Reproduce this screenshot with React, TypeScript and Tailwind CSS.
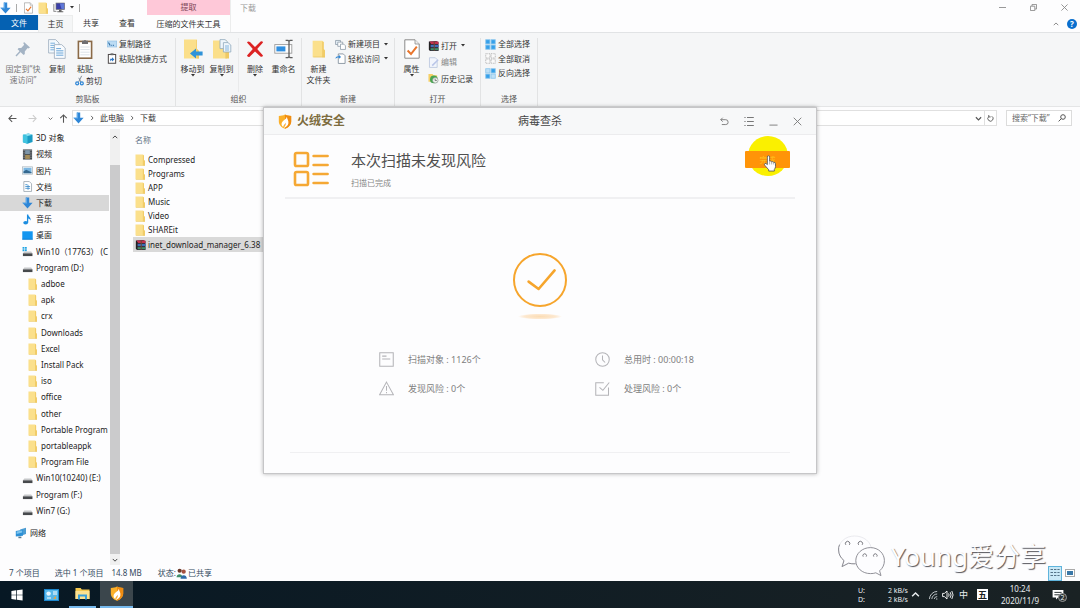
import React from "react";

type IconProps = { className?: string };

const Folder = ({ className = "h-[13px] w-[10px]" }: IconProps) => (
  <svg viewBox="0 0 10 13" className={className} preserveAspectRatio="none" aria-hidden="true">
    <path d="M0.5 0.5H8L9 1.5V6.5L10 7.5V12.5H0.5Z" fill="#fbe08c" />
    <path d="M7.8 1L9 1.5V6.5L10 7.5V12.5H7.8Z" fill="#f1cc68" />
    <path d="M1 12.5H10V12H1Z" fill="#eac764" />
  </svg>
);

const DownArrow = ({ className = "h-3 w-[11px]" }: IconProps) => (
  <svg viewBox="0 0 11 12" className={className} aria-hidden="true">
    <path d="M3.8 0.5H7.2V5.8H10.6L5.5 11.6L0.4 5.8H3.8Z" fill="#2f86d6" />
    <path d="M3.8 0.5H5V6.5H1L0.4 5.8H3.8Z" fill="#5aa8ea" />
  </svg>
);

const CheckDoc = ({ className = "h-[11px] w-[9px]" }: IconProps) => (
  <svg viewBox="0 0 16 20" className={className} aria-hidden="true">
    <path d="M0.8 0.8H11L15.2 5V19.2H0.8Z" fill="#fff" stroke="#8a8a8a" strokeWidth="1" />
    <path d="M11 0.8V5H15.2" fill="#eee" stroke="#8a8a8a" strokeWidth="0.8" />
    <path d="M3.6 11.5L7 15L12.8 7.6" fill="none" stroke="#e8752c" strokeWidth="2" />
  </svg>
);

const Monitor = () => (
  <svg viewBox="0 0 14 12" className="h-[11px] w-3" aria-hidden="true">
    <path d="M1 2V10M0.5 10.5H4" stroke="#777" strokeWidth="1" />
    <rect x="3.5" y="0.8" width="10" height="7.6" fill="#3b3fa8" stroke="#777" strokeWidth="0.8" />
    <path d="M8 1.4H13V7.8H10Z" fill="#5f78d8" />
    <path d="M7 8.5H10V10.5H12V11.5H5V10.5H7Z" fill="#666" />
  </svg>
);

const Rar = ({ className = "h-3 w-[11px]" }: IconProps) => (
  <svg viewBox="0 0 12 12" className={className} aria-hidden="true">
    <path d="M1 1L9 0.5L11.5 2V11.5H2.5L1 10Z" fill="#3a2a3a" />
    <path d="M2 1.2H11.4V3.8H2.8Z" fill="#c4304c" />
    <path d="M2.6 4.8H11.6V7.2H2.6Z" fill="#3c6fb8" />
    <path d="M2.6 8.4H11.6V10.6H2.6Z" fill="#3e8f68" />
    <path d="M1 1L2.6 3V11.4L1 10Z" fill="#222" />
    <path d="M6.2 1V11.5H7.4V1Z" fill="#6b4a38" />
  </svg>
);

const Pin = () => (
  <svg viewBox="0 0 16 16" className="size-4" aria-hidden="true">
    <path d="M9 1L15 6.6L13.3 7.4L12.6 7.1L9.8 10.4L9.8 13L8.6 13.9L2.6 8.2L3.6 7.1L6.2 7L9.2 3.8L8.3 2.2Z" fill="#a3b3c4" />
    <path d="M5.4 10.3L1 15" stroke="#a3b3c4" strokeWidth="1.4" />
  </svg>
);

const CopyDocs = ({ className = "h-5 w-[18px]" }: IconProps) => (
  <svg viewBox="0 0 18 20" className={className} aria-hidden="true">
    <path d="M0.6 0.6H7.6L11 4V14H0.6Z" fill="#f4f9fd" stroke="#9aabbb" strokeWidth="0.8" />
    <path d="M2.4 4.2H7M2.4 6.4H8M2.4 8.6H8M2.4 10.8H8" stroke="#7ab0dc" strokeWidth="1" />
    <path d="M6.4 5.6H13.6L17.2 9V19.4H6.4Z" fill="#f8fbfe" stroke="#9aabbb" strokeWidth="0.8" />
    <path d="M8.2 9.6H13M8.2 11.8H15.4M8.2 14H15.4M8.2 16.2H15.4" stroke="#6aa6d8" strokeWidth="1" />
  </svg>
);

const Clipboard = () => (
  <svg viewBox="0 0 16 20" className="h-5 w-4" aria-hidden="true">
    <rect x="1.4" y="2.4" width="13.2" height="16.8" fill="#fff" stroke="#8a6a48" strokeWidth="1.6" />
    <path d="M3.4 8H12.6M3.4 10.6H12.6M3.4 13.2H12.6M3.4 15.8H12.6" stroke="#d3dbe2" strokeWidth="0.8" />
    <path d="M5 3.6V1.8H6.8A1.3 1.3 0 0 1 9.2 1.8H11V5H5Z" fill="#6f6f72" />
  </svg>
);

const PathIcon = () => (
  <svg viewBox="0 0 10 8" className="h-2 w-[10px]" aria-hidden="true">
    <rect x="0.3" y="1" width="9.4" height="6" fill="#bcdcf4" stroke="#8cbde2" strokeWidth="0.6" />
    <path d="M1.5 2.5L3.2 5.5M4.4 5.4H5.2M6.2 5.4H7" stroke="#2d6ca4" strokeWidth="1.1" />
  </svg>
);

const ShortcutIcon = () => (
  <svg viewBox="0 0 10 12" className="h-[11px] w-[10px]" aria-hidden="true">
    <rect x="1" y="1.6" width="8" height="9.6" fill="#fff" stroke="#4f4a4a" strokeWidth="1.1" />
    <rect x="3.4" y="0.4" width="3.2" height="2" fill="#666" />
    <path d="M3 9.2V6.4H5V4.6L7.6 7L5 9.2V8H4Z" fill="#2d76c4" />
  </svg>
);

const Scissors = () => (
  <svg viewBox="0 0 10 12" className="h-[11px] w-[9px]" aria-hidden="true">
    <path d="M7.4 0.8L4 7.6M4.2 3L6.6 7.8" stroke="#7c8a96" strokeWidth="1.1" />
    <circle cx="2.4" cy="9.2" r="1.6" fill="none" stroke="#2f86d6" strokeWidth="1.4" />
    <circle cx="7.6" cy="9.2" r="1.6" fill="none" stroke="#2f86d6" strokeWidth="1.4" />
  </svg>
);

const MoveTo = () => (
  <svg viewBox="0 0 20 20" className="size-5" aria-hidden="true">
    <path d="M1 0.5H14V10L16 12V19.5H1Z" fill="#fbdf8a" />
    <path d="M14 1V10L16 12V19.5H13.4V1Z" fill="#efc964" />
    <path d="M19.6 12.6H13V9.4L7 14.6L13 19.6V16.6H19.6Z" fill="#2f93d8" />
  </svg>
);

const CopyTo = () => (
  <svg viewBox="0 0 20 20" className="size-5" aria-hidden="true">
    <path d="M1 1.5H15V19.5H1Z" fill="#fbdf8a" />
    <path d="M13.4 10H15L17 12V19.5H13.4Z" fill="#efc964" />
    <path d="M8 0.6H13L15.4 2.6V9.6H8Z" fill="#eff6fb" stroke="#91a9bc" strokeWidth="0.8" />
    <path d="M11.4 3.6H16L18.8 6V13H11.4Z" fill="#eff6fb" stroke="#91a9bc" strokeWidth="0.8" />
    <path d="M13 7H17M13 9H17M13 11H17" stroke="#6aa6d8" strokeWidth="0.8" />
  </svg>
);

const Delete = () => (
  <svg viewBox="0 0 20 20" className="size-5" aria-hidden="true">
    <path d="M2 3.4Q3 1.6 5 3L10 8L15.6 2.4Q17.6 1.6 18 3.4L12.2 10L18 16.4Q17.4 18.6 15.4 17.4L10 12.4L4.4 18Q2.4 18.4 2 16.6L7.8 10Z" fill="#dc2323" />
  </svg>
);

const Rename = () => (
  <svg viewBox="0 0 20 20" className="size-5" aria-hidden="true">
    <rect x="0.8" y="5.6" width="17" height="8.6" fill="#fff" stroke="#9b9b9b" strokeWidth="0.9" />
    <rect x="2.4" y="7.4" width="9" height="5" fill="#2f8fe0" />
    <path d="M11.6 1.4H14L15 2.2L16 1.4H18.6M15 2V18M11.6 18.6H14L15 17.8L16 18.6H18.6" fill="none" stroke="#5d5d5d" strokeWidth="1.3" />
  </svg>
);

const NewItem = () => (
  <svg viewBox="0 0 12 12" className="size-[11px]" aria-hidden="true">
    <path d="M0.6 1.6H6V6H0.6Z" fill="#e5eef5" stroke="#8796a3" strokeWidth="0.8" />
    <path d="M3 3.4H8.4V8H3Z" fill="#fff" stroke="#8796a3" strokeWidth="0.8" />
    <path d="M6 5.6H9.6L11.4 7.4V11.4H6Z" fill="#fff" stroke="#8796a3" strokeWidth="0.8" />
  </svg>
);

const EasyAccess = () => (
  <svg viewBox="0 0 12 12" className="size-[11px]" aria-hidden="true">
    <path d="M3.6 1H9L11 3V11.4H3.6Z" fill="#fff" stroke="#7d8b98" strokeWidth="0.9" />
    <path d="M0.6 6.4C0.6 4 2.4 3.4 4.4 3.6V2.2L6.6 4.4L4.4 6.4V5C2.6 4.8 2 5.4 0.6 6.4Z" fill="#2f86d6" />
  </svg>
);

const EditIcon = () => (
  <svg viewBox="0 0 12 12" className="size-[11px]" aria-hidden="true">
    <path d="M1.6 0.8H8L10 2.8V11.4H1.6Z" fill="#f2f5fc" stroke="#b9c6dd" strokeWidth="0.9" />
    <path d="M4 8.8L10.6 2.4L11.6 3.6L5.2 10Z" fill="#b9c5e8" />
  </svg>
);

const HistoryIcon = () => (
  <svg viewBox="0 0 12 12" className="size-[11px]" aria-hidden="true">
    <path d="M0.5 1H5L6 2.4H10V9.6H0.5Z" fill="#f5cf66" />
    <circle cx="6.4" cy="7" r="4.2" fill="#47a552" />
    <circle cx="8" cy="8" r="3" fill="#eef2ee" stroke="#7a8a80" strokeWidth="0.6" />
    <path d="M7.8 6.2V8.2H9.6" stroke="#555" strokeWidth="0.8" fill="none" />
  </svg>
);

const SelectGrid = ({ kind }: { kind: "all" | "none" | "invert" }) => {
  const on = "#35a0ea";
  const pale = "#bfe0f6";
  const off = "#fafafa";
  const fills = kind === "all" ? [on, on, on, on] : kind === "none" ? [off, off, off, off] : [pale, on, on, pale];
  const stroke = kind === "none" ? "#a7a7a7" : "#8cc6ec";
  const dash = kind === "none" ? "1 0.8" : undefined;
  return (
    <svg viewBox="0 0 12 12" className="size-[11px]" aria-hidden="true">
      {[[0.8, 0.8], [6.6, 0.8], [0.8, 6.6], [6.6, 6.6]].map(([x, y], i) => (
        <rect key={i} x={x} y={y} width="4.6" height="4.6" fill={fills[i]} stroke={stroke} strokeWidth="0.9" strokeDasharray={dash} />
      ))}
    </svg>
  );
};

const Cube = () => (
  <svg viewBox="0 0 12 12" className="size-[11px]" aria-hidden="true">
    <path d="M1 2L7 0.5L11.5 2V9.8L6 11.6L1 10Z" fill="#1b9bc4" />
    <path d="M1 2L7 0.5L11.5 2L6 3.4Z" fill="#8ee2f2" />
    <path d="M1 2L6 3.4V11.6L1 10Z" fill="#41c4e0" />
  </svg>
);

const Film = () => (
  <svg viewBox="0 0 12 12" className="size-[11px]" aria-hidden="true">
    <rect x="1" y="0.5" width="10" height="11" fill="#3d4349" />
    <rect x="3.4" y="1.2" width="5.2" height="4.4" fill="#7d95a8" />
    <rect x="3.4" y="6.4" width="5.2" height="4.4" fill="#a48c58" />
    <path d="M2.2 1V11M9.8 1V11" stroke="#d5d5d5" strokeWidth="0.9" strokeDasharray="1 1" />
  </svg>
);

const Picture = () => (
  <svg viewBox="0 0 12 12" className="size-[11px]" aria-hidden="true">
    <rect x="0.6" y="2" width="10.8" height="8" fill="#fff" stroke="#a9b4bc" strokeWidth="0.8" />
    <rect x="1.6" y="3" width="8.8" height="6" fill="#7cb7e2" />
    <path d="M1.6 7L4.6 5.2L10.4 8V9H1.6Z" fill="#35688f" />
  </svg>
);

const DocIcon = () => (
  <svg viewBox="0 0 12 12" className="size-[11px]" aria-hidden="true">
    <path d="M2 0.6H8L10.4 3V11.4H2Z" fill="#fff" stroke="#8f9ba6" strokeWidth="0.8" />
    <path d="M3.6 4H6M3.6 6H8.8M3.6 8H8.8M6.6 4.2V9.6" stroke="#3a8bc9" strokeWidth="0.9" />
  </svg>
);

const MusicIcon = () => (
  <svg viewBox="0 0 12 12" className="size-[11px]" aria-hidden="true">
    <ellipse cx="4" cy="9.6" rx="2.6" ry="1.9" fill="#1c8de0" />
    <path d="M5.4 0.6H6.8C7 3 10 3.6 9.4 7.4C9 5.6 7.8 5 6.8 4.8V9.6H5.4Z" fill="#1c8de0" />
  </svg>
);

const Desktop = () => (
  <svg viewBox="0 0 12 12" className="size-[11px]" aria-hidden="true">
    <rect x="0.3" y="1.4" width="11.4" height="9" fill="#1496f0" />
    <path d="M0.3 9.6H11.7V10.4H0.3Z" fill="#0b74c4" />
  </svg>
);

const Drive = ({ system = false }: { system?: boolean }) => (
  <svg viewBox="0 0 12 12" className="size-[11px]" aria-hidden="true">
    {system && <path d="M0.6 1H2.6V3H0.6ZM3.2 1H5.2V3H3.2ZM0.6 3.6H2.6V5.6H0.6ZM3.2 3.6H5.2V5.6H3.2Z" fill="#20a4e4" />}
    <path d="M2.6 6H10L11.4 8H1Z" fill="#c5c7c9" />
    <rect x="1" y="8" width="10.4" height="3" fill="#46494c" />
  </svg>
);

const Network = () => (
  <svg viewBox="0 0 12 12" className="size-3" aria-hidden="true">
    <path d="M5 2.4L11 0.8V7L8 8Z" fill="#4c9cd2" />
    <path d="M0.8 4L8 2.8V8.8L0.8 9.4Z" fill="#2b8fd6" />
    <path d="M1.6 4.6L7.2 3.6V5.6L1.6 7Z" fill="#7cc4ee" />
    <path d="M3.4 9.6H6.4V11.2H3.4Z" fill="#5a7a90" />
  </svg>
);

const Shield = ({ className = "h-[15px] w-[13px]" }: IconProps) => (
  <svg viewBox="0 0 14 16" className={className} aria-hidden="true">
    <path d="M7 0.5C9 1.6 11 2 13.6 2V8C13.6 12 10.4 14.4 7 15.8C3.6 14.4 0.4 12 0.4 8V2C3 2 5 1.6 7 0.5Z" fill="#fbb02a" />
    <path d="M7 0.5C9 1.6 11 2 13.6 2V8C13.6 12 10.4 14.4 7 15.8Z" fill="#f08c12" />
    <path d="M9 3C9.2 6 11.2 7 10.6 10C10.2 12.2 8 13.8 5.6 15C7.4 12.8 8 11 7.6 9.4C7 11 5.6 11.6 5 13.8C3 12.2 2.8 10 4.2 8.2C5.8 6.4 8.2 5.8 9 3Z" fill="#fff" />
  </svg>
);

const Chevron = ({ dir, className = "size-2" }: { dir: "up" | "down" | "right"; className?: string }) => (
  <svg viewBox="0 0 8 8" className={className} fill="none" stroke="currentColor" strokeWidth="1.3" aria-hidden="true">
    <path d={dir === "up" ? "M1 5.6L4 2.6L7 5.6" : dir === "down" ? "M1 2.6L4 5.6L7 2.6" : "M2.8 1.2L5.4 4L2.8 6.8"} />
  </svg>
);

const Arrow = ({ dir, className }: { dir: "left" | "right" | "up"; className: string }) => (
  <svg viewBox="0 0 10 10" className={className} fill="none" stroke="currentColor" strokeWidth="1.2" aria-hidden="true">
    <path d={dir === "left" ? "M9.4 5H1M4.6 1.2L1 5L4.6 8.8" : dir === "right" ? "M0.6 5H9M5.4 1.2L9 5L5.4 8.8" : "M5 9.6V1M1.4 4.6L5 1L8.6 4.6"} />
  </svg>
);

const Caret = () => (
  <svg viewBox="0 0 4 3" className="h-[3px] w-1 shrink-0" aria-hidden="true">
    <path d="M0 0H4L2 2.6Z" fill="#333" />
  </svg>
);

const Big = ({ icon, label, caret = false, width = "w-7", muted = false }: { icon: React.ReactNode; label: React.ReactNode; caret?: boolean; width?: string; muted?: boolean }) => (
  <button type="button" className={`flex shrink-0 flex-col items-center whitespace-nowrap ${width} ${muted ? "text-[#777]" : "text-[#333]"}`}>
    <span className="flex h-[22px] items-center">{icon}</span>
    <span className="pt-[3px] leading-[11px]">{label}</span>
    {caret && <Caret />}
  </button>
);

const Small = ({ icon, label, caret = false, muted = false, height = "h-[15px]" }: { icon: React.ReactNode; label: string; caret?: boolean; muted?: boolean; height?: string }) => (
  <button type="button" className={`flex items-center gap-[2px] whitespace-nowrap ${height} ${muted ? "text-[#888]" : "text-[#333]"}`}>
    {icon}
    <span>{label}</span>
    {caret && <span className="pl-[2px]"><Caret /></span>}
  </button>
);

const Group = ({ title, width, children }: { title: string; width: string; children: React.ReactNode }) => (
  <section className={`flex shrink-0 flex-col border-r border-[#e2e3e4] ${width}`}>
    <div className="flex h-[54px] items-start">{children}</div>
    <h2 className="text-center leading-[13px] text-[#555]">{title}</h2>
  </section>
);

const Header = () => (
  <header className="flex h-[33px] shrink-0 border-b border-[#e1e3e5] bg-[#fdfdfe]">
    <div className="flex w-[147px] flex-col">
      <div className="flex h-4 items-center gap-[5px] text-[#999]">
        <DownArrow />
        <span className="mr-[2px] h-2 w-px bg-[#aaa]" />
        <CheckDoc className="h-3 w-[9px]" />
        <Folder className="h-3 w-[10px]" />
        <Monitor />
        <Caret />
        <span className="h-2 w-px bg-[#aaa]" />
      </div>
      <nav className="flex flex-1 text-[8px] text-[#333]">
        <button type="button" className="h-[15px] w-[38px] bg-[#0561b2] text-white">文件</button>
        <button type="button" className="h-[17px] w-[35px] border-x border-t border-[#eceded] bg-[#f5f6f7]">主页</button>
        <button type="button" className="h-4 w-9">共享</button>
        <button type="button" className="h-4 w-9">查看</button>
      </nav>
    </div>
    <div className="flex w-[84px] flex-col border-r border-[#eceded] text-center text-[8px]">
      <div className="h-[15px] bg-[#fec8d8] leading-[13px] text-[#7d4657]">提取</div>
      <button type="button" className="flex-1 whitespace-nowrap text-[#333]">压缩的文件夹工具</button>
    </div>
    <h1 className="pl-[9px] text-[8px] leading-[15px] text-[#999]">下载</h1>
    <div className="ml-auto flex flex-col items-end text-[#888]">
      <div className="flex h-[15px] items-center">
        <button type="button" aria-label="最小化" className="flex w-[31px] justify-center"><span className="h-px w-[7px] bg-[#999]" /></button>
        <button type="button" aria-label="还原" className="flex w-[31px] justify-center">
          <svg viewBox="0 0 8 8" className="size-[7px]" fill="none" stroke="currentColor"><path d="M0.5 2.5H5.5V7.5H0.5ZM2.3 2.3V0.5H7.5V5.7H5.7" /></svg>
        </button>
        <button type="button" aria-label="关闭" className="flex w-[31px] justify-center">
          <svg viewBox="0 0 8 8" className="size-[7px]" fill="none" stroke="currentColor"><path d="M0.5 0.5L7.5 7.5M7.5 0.5L0.5 7.5" /></svg>
        </button>
      </div>
      <div className="flex flex-1 items-center gap-2 pr-[3px]">
        <button type="button" aria-label="折叠功能区"><Chevron dir="up" className="size-[6px]" /></button>
        <button type="button" aria-label="帮助" className="size-[10px] rounded-full bg-[#0a6fce] text-[8px] font-bold leading-[10px] text-white">?</button>
      </div>
    </div>
  </header>
);

const Ribbon = () => (
  <div className="flex h-[74px] shrink-0 border-b border-[#e4e5e6] bg-[#f5f6f7] pt-[5px] text-[8px]">
    <Group title="剪贴板" width="w-44">
      <div className="flex pl-[3px]">
        <Big icon={<Pin />} label={<>固定到“快<br />速访问”</>} width="w-10" muted />
        <Big icon={<CopyDocs />} label="复制" />
        <div className="flex w-9 flex-col items-start">
          <Big icon={<Clipboard />} label="粘贴" />
          <span className="pl-1"><Small icon={<Scissors />} label="剪切" height="h-[13px]" /></span>
        </div>
        <div className="flex flex-col items-start">
          <Small icon={<PathIcon />} label="复制路径" height="h-3" />
          <Small icon={<ShortcutIcon />} label="粘贴快捷方式" height="h-[17px]" />
        </div>
      </div>
    </Group>
    <Group title="组织" width="w-[126px]">
      <div className="flex pl-[2px]">
        <Big icon={<MoveTo />} label="移动到" caret width="w-[29px]" />
        <Big icon={<CopyTo />} label="复制到" caret width="w-[29px]" />
        <span className="mx-[2px] h-[54px] w-px bg-[#e9eaeb]" />
        <Big icon={<Delete />} label="删除" caret />
        <Big icon={<Rename />} label="重命名" width="w-[29px]" />
      </div>
    </Group>
    <Group title="新建" width="w-[93px]">
      <div className="flex">
        <Big icon={<Folder className="h-[18px] w-[13px]" />} label={<>新建<br />文件夹</>} width="w-[33px]" />
        <div className="flex flex-col items-start">
          <Small icon={<NewItem />} label="新建项目" caret height="h-3" />
          <Small icon={<EasyAccess />} label="轻松访问" caret height="h-[17px]" />
        </div>
      </div>
    </Group>
    <Group title="打开" width="w-[86px]">
      <div className="flex">
        <Big icon={<CheckDoc className="h-5 w-4" />} label="属性" caret width="w-[33px]" />
        <div className="flex flex-col items-start">
          <Small icon={<Rar />} label="打开" caret />
          <Small icon={<EditIcon />} label="编辑" muted height="h-[18px]" />
          <Small icon={<HistoryIcon />} label="历史记录" />
        </div>
      </div>
    </Group>
    <Group title="选择" width="w-[57px]">
      <div className="flex flex-col items-start pl-1">
        <Small icon={<SelectGrid kind="all" />} label="全部选择" height="h-3" />
        <Small icon={<SelectGrid kind="none" />} label="全部取消" height="h-[17px]" />
        <Small icon={<SelectGrid kind="invert" />} label="反向选择" height="h-3" />
      </div>
    </Group>
  </div>
);

const AddressBar = () => (
  <div className="flex h-[22px] shrink-0 items-center pr-2 text-[8px] text-[#333]">
    <div className="flex w-[72px] items-center gap-[11px] pl-2 text-[#555]">
      <button type="button" aria-label="后退"><Arrow dir="left" className="size-[9px]" /></button>
      <button type="button" aria-label="前进" className="text-[#ccc]"><Arrow dir="right" className="size-[9px]" /></button>
      <div className="flex items-center gap-[6px]">
        <button type="button" aria-label="最近的位置"><Chevron dir="down" className="size-[5px]" /></button>
        <button type="button" aria-label="向上"><Arrow dir="up" className="size-[9px]" /></button>
      </div>
    </div>
    <nav className="flex h-4 flex-1 items-center border border-[#e0e0e0] bg-white">
      <DownArrow />
      <span className="px-[5px] text-[#666]"><Chevron dir="right" className="size-[6px]" /></span>
      <a href="#pc">此电脑</a>
      <span className="px-[5px] text-[#666]"><Chevron dir="right" className="size-[6px]" /></span>
      <a href="#downloads">下载</a>
      <button type="button" aria-label="历史位置" className="ml-auto px-[2px] text-[#555]"><Chevron dir="down" className="size-[7px]" /></button>
      <button type="button" aria-label="刷新" className="flex h-full items-center border-l border-[#e0e0e0] px-[2px] text-[#555]">
        <svg viewBox="0 0 8 8" className="size-[7px]" fill="none" stroke="currentColor"><path d="M5.4 1.4A3 3 0 1 1 2 1.8M2 0V2.2H4.2" /></svg>
      </button>
    </nav>
    <label className="ml-[9px] flex h-4 w-[66px] items-center border border-[#dcdcdc] bg-white px-[5px]">
      <input type="text" aria-label="搜索下载" placeholder="搜索“下载”" className="min-w-0 flex-1 bg-transparent outline-none placeholder:text-[#666]" />
      <svg viewBox="0 0 8 8" className="size-2 shrink-0" fill="none" stroke="#555"><circle cx="5" cy="3" r="2.3" /><path d="M3.3 4.7L0.6 7.4" /></svg>
    </label>
  </div>
);

const tree: { name: string; icon: React.ReactNode; nested?: boolean; active?: boolean }[] = [
  { name: "3D 对象", icon: <Cube /> },
  { name: "视频", icon: <Film /> },
  { name: "图片", icon: <Picture /> },
  { name: "文档", icon: <DocIcon /> },
  { name: "下载", icon: <DownArrow />, active: true },
  { name: "音乐", icon: <MusicIcon /> },
  { name: "桌面", icon: <Desktop /> },
  { name: "Win10（17763） (C", icon: <Drive system /> },
  { name: "Program (D:)", icon: <Drive /> },
  ...["adboe", "apk", "crx", "Downloads", "Excel", "Install Pack", "iso", "office", "other", "Portable Program", "portableappk", "Program File"].map((name) => ({
    name,
    icon: <Folder className="h-3 w-[9px]" />,
    nested: true,
  })),
  { name: "Win10(10240) (E:)", icon: <Drive /> },
  { name: "Program (F:)", icon: <Drive /> },
  { name: "Win7 (G:)", icon: <Drive /> },
];

const Sidebar = () => (
  <aside className="flex w-[120px] shrink-0 text-[8px] text-[#222]">
    <div className="min-w-0 flex-1 overflow-hidden pr-px pt-px">
      <ul className="flex h-[389px] flex-col">
        {tree.map((item) => (
          <li key={item.name} className={`flex flex-1 ${item.active ? "bg-[#d8d8d8]" : ""}`}>
            <button type="button" className={`flex min-w-0 flex-1 items-center whitespace-nowrap ${item.nested ? "gap-1 pl-7" : "gap-[3px] pl-[22px]"}`}>
              <span className="shrink-0">{item.icon}</span>
              <span>{item.name}</span>
            </button>
          </li>
        ))}
      </ul>
      <button type="button" className="mt-[6px] flex h-4 items-center gap-[3px] pl-[15px]">
        <Network />
        网络
      </button>
    </div>
    <div className="flex w-[10px] flex-col items-center bg-[#f0f0f0] text-[#444]">
      <span className="flex h-9 pt-[5px]"><Chevron dir="up" className="size-[6px]" /></span>
      <span className="w-full flex-1 bg-[#cbcbcc]" />
      <span className="flex h-[11px] items-center"><Chevron dir="down" className="size-[6px]" /></span>
    </div>
  </aside>
);

const files = ["Compressed", "Programs", "APP", "Music", "Video", "SHAREit"];

const FileList = () => (
  <div className="min-w-0 flex-1 pl-[13px] pt-[2px] text-[8px] text-[#222]">
    <table className="w-full border-collapse">
      <thead>
        <tr>
          <th className="h-[22px] pb-1 pl-[2px] text-left align-middle font-normal text-[#5f7385]">名称</th>
        </tr>
      </thead>
      <tbody>
        {files.map((f) => (
          <tr key={f}>
            <td className="h-[14px] p-0">
              <span className="flex h-[14px] items-center gap-[3px] pl-[2px]"><Folder className="h-3 w-[10px]" />{f}</span>
            </td>
          </tr>
        ))}
        <tr>
          <td className="p-0">
            <span className="flex h-[15px] w-[260px] items-center gap-[2px] bg-[#d9d9d9] pl-[2px]"><Rar />inet_download_manager_6.38</span>
          </td>
        </tr>
      </tbody>
    </table>
  </div>
);

const StatusBar = () => (
  <footer className="flex h-4 shrink-0 items-center px-[9px] text-[8px] text-[#334a60]">
    <span>7 个项目</span>
    <span className="pl-[15px]">选中 1 个项目</span>
    <span className="pl-2">14.8 MB</span>
    <span className="pl-4">状态:</span>
    <svg viewBox="0 0 12 12" className="size-[11px]" aria-hidden="true">
      <circle cx="4" cy="3" r="2.3" fill="#6b3a2a" /><path d="M0.6 10C0.6 5.6 7 5.6 7 10Z" fill="#3f8e6a" />
      <circle cx="8.4" cy="4" r="2.3" fill="#a5503e" /><path d="M5 11.6C5 6.6 11.8 6.6 11.8 11.6Z" fill="#2f6aa8" />
    </svg>
    <span className="pl-px">已共享</span>
    <div className="ml-auto -mr-1 flex items-center gap-[3px]">
      <button type="button" aria-label="详细信息" className="flex h-[15px] w-[14px] items-center justify-center border border-[#5fb4dc] bg-[#c9e8f6]">
        <svg viewBox="0 0 10 10" className="size-[10px]" stroke="#547387" strokeWidth="1"><path d="M0.5 1.5H3M4 1.5H6.4M7.4 1.5H9.6M0.5 4.5H3M4 4.5H6.4M7.4 4.5H9.6M0.5 7.5H3M4 7.5H6.4M7.4 7.5H9.6" /></svg>
      </button>
      <button type="button" aria-label="大图标" className="flex h-2 w-[10px] items-center border border-[#aaa] bg-white p-px"><span className="h-full w-full bg-[#3a78a8]" /></button>
    </div>
  </footer>
);

const Watermark = () => (
  <div className="pointer-events-none absolute right-[34px] bottom-[31px] flex items-center gap-[6px]">
    <svg viewBox="0 0 48 42" className="h-[42px] w-12" aria-hidden="true">
      <path d="M17.6 1C8.6 1 1.6 7 1.6 15C1.6 19.4 3.8 23 7 25.6L5 31.6L11.6 28.2C13.4 28.6 15.6 28.8 18 28.8C27 28.8 34.4 23 34.4 15C34.4 7 27 1 17.6 1Z" fill="#fdfdff" stroke="#dcdce2" strokeWidth="0.6" />
      <path d="M2.6 9.6Q1.2 12.4 1.6 15C1.6 19.4 3.8 23 7 25.6L5 31.6L11.6 28.2Q14.6 29 18.6 28.8" fill="none" stroke="#8b8b92" strokeWidth="1" />
      <path d="M8.8 9.8A2.2 2.2 0 1 1 12.4 9.8M21.6 9.8A2.2 2.2 0 1 1 25.2 9.8" fill="none" stroke="#77777e" strokeWidth="1" />
      <path d="M33.4 12.6C25.4 12.6 18.8 18.4 18.8 25.6C18.8 33 25.4 38.6 33.4 38.6C35.4 38.6 37.2 38.4 38.8 37.8L44 40.6L42.6 35.8C45.8 33.2 47.4 29.6 47.4 25.6C47.4 18.4 41.4 12.6 33.4 12.6Z" fill="#fdfdff" stroke="#85858c" strokeWidth="0.9" />
      <path d="M26.2 21.6A1.8 1.8 0 1 1 29.2 21.6M36.8 21.6A1.8 1.8 0 1 1 39.8 21.6" fill="none" stroke="#77777e" strokeWidth="1" />
    </svg>
    <span className="text-[26px] leading-9 text-[#fdfdff] [text-shadow:1px_1px_1px_#55555c]">Young爱分享</span>
  </div>
);

const Taskbar = () => (
  <footer className="flex h-[27px] shrink-0 items-stretch bg-linear-to-r from-[#071824] to-[#1a2224] text-[8px] text-[#e8ecee]">
    <button type="button" aria-label="开始" className="flex w-[33px] items-center justify-center">
      <svg viewBox="0 0 12 12" className="size-3" fill="#fff"><path d="M0.4 2L5.2 1.3V5.7H0.4ZM5.9 1.2L11.6 0.4V5.7H5.9ZM0.4 6.3H5.2V10.7L0.4 10ZM5.9 6.3H11.6V11.6L5.9 10.8Z" /></svg>
    </button>
    <button type="button" aria-label="控制面板" className="flex w-9 items-center justify-center">
      <svg viewBox="0 0 15 12" className="h-3 w-[15px]"><rect width="15" height="12" y="0" fill="#1c86cc" /><rect x="1" y="1" width="13" height="10" fill="#58b7ea" /><circle cx="4.6" cy="4.6" r="2.2" fill="#e6f5fd" /><path d="M9 3H13M9 5H13M3 9H7" stroke="#fff" /><path d="M9 9.4L12 7V10Z" fill="#e9a13c" /></svg>
    </button>
    <button type="button" aria-label="文件资源管理器" className="flex w-[27px] items-center justify-center border-b-2 border-[#76b9ed]">
      <svg viewBox="0 0 15 13" className="h-[13px] w-[15px]"><path d="M0.5 1H5.6L6.8 2.4H14.5V12H0.5Z" fill="#f4c84e" /><path d="M0.5 4H14.5V12H0.5Z" fill="#fce190" /><path d="M3 12.4V7.6H12V12.4H10V9.6H5V12.4Z" fill="#3a9fd8" /></svg>
    </button>
    <button type="button" aria-label="火绒安全" className="ml-1 flex w-[33px] items-center justify-center border-b-2 border-[#76b9ed] bg-[#3b464c]"><Shield className="h-[15px] w-[14px]" /></button>
    <div className="ml-auto flex items-center pr-[13px]">
      <div className="grid w-[50px] grid-cols-[auto_1fr] text-right text-[7px] leading-[9px]">
        <span>U:</span><span>2 kB/s</span>
        <span>D:</span><span>2 kB/s</span>
      </div>
      <button type="button" aria-label="显示隐藏的图标" className="ml-[3px]"><Chevron dir="up" className="size-[9px]" /></button>
      <svg viewBox="0 0 10 10" className="ml-2 size-[10px]" fill="none" stroke="#b9bfc2" aria-hidden="true"><path d="M1.4 9A8 8 0 0 1 9.2 1.4M3.8 9A5.4 5.4 0 0 1 9.2 4M6.2 9A3 3 0 0 1 9.2 6.6" /><path d="M8 9H9.4" /></svg>
      <svg viewBox="0 0 12 10" className="ml-1 h-[10px] w-3" fill="none" stroke="#fff" strokeWidth="0.9" aria-hidden="true"><path d="M0.6 3.4H2.4L5 1V9L2.4 6.6H0.6ZM6.6 3.4Q7.6 5 6.6 6.6M8.2 2.2Q10 5 8.2 7.8M9.8 1Q12.4 5 9.8 9" /></svg>
      <span className="ml-[5px] text-[9px]">中</span>
      <span className="ml-[9px] flex size-[11px] items-center justify-center bg-white text-[9px] font-bold leading-none text-[#1a2224]">五</span>
      <div className="ml-[9px] w-[46px] text-center leading-3"><div>10:24</div><div>2020/11/9</div></div>
      <button type="button" aria-label="通知" className="relative ml-[9px] size-[15px]">
        <svg viewBox="0 0 12 12" className="size-3" aria-hidden="true"><path d="M0.6 1H11.4V8.4H6L4 10.6V8.4H0.6Z" fill="#fff" /><path d="M2.4 3.4H9.6M2.4 5.8H9.6" stroke="#1a2224" strokeWidth="0.9" /></svg>
        <span className="absolute right-0 bottom-0 size-[9px] rounded-full border border-[#999] bg-[#2b3234] text-[7px] leading-[7px]">2</span>
      </button>
    </div>
  </footer>
);

const Stat = ({ icon, text }: { icon: React.ReactNode; text: string }) => (
  <div className="flex h-[29px] items-center gap-[14px]">
    <svg viewBox="0 0 16 16" className="size-[15px] shrink-0" fill="none" stroke="#b4b4b8" strokeWidth="1.1" aria-hidden="true">{icon}</svg>
    <span>{text}</span>
  </div>
);

const ScanDialog = () => (
  <div role="dialog" aria-labelledby="scan-title" className="absolute top-[107px] left-1/2 w-[554px] -translate-x-1/2 border border-[#c6c6c8] bg-[#fdfdfe] pb-5 shadow-[0_0_4px_rgba(0,0,0,0.3)]">
    <div className="grid h-[27px] grid-cols-3 items-center border-b border-[#ececee] bg-[#f7f8f9] px-[14px]">
      <div className="flex items-center gap-[5px]">
        <Shield className="h-[15px] w-[14px]" />
        <span className="text-[12px] font-bold text-[#7d6c3e]">火绒安全</span>
      </div>
      <h2 id="scan-title" className="text-center text-[11px] text-[#444]">病毒查杀</h2>
      <div className="flex items-center justify-end gap-[15px] text-[#777]">
        <button type="button" aria-label="返回"><svg viewBox="0 0 10 10" className="size-[9px]" fill="none" stroke="currentColor"><path d="M3 0.8L0.8 3L3 5.2M0.8 3H6.4Q9 3 9 5.6V6Q9 8.4 6.4 8.4H2" /></svg></button>
        <button type="button" aria-label="菜单"><svg viewBox="0 0 10 10" className="size-[10px]" fill="none" stroke="currentColor"><path d="M0.4 1.5H1.6M3 1.5H9.8M0.4 5.5H1.6M3 5.5H9.8M0.4 9.5H1.6M3 9.5H9.8" /></svg></button>
        <button type="button" aria-label="最小化"><svg viewBox="0 0 10 10" className="size-[9px]" fill="none" stroke="currentColor"><path d="M0.5 9H9.5" /></svg></button>
        <button type="button" aria-label="关闭"><svg viewBox="0 0 10 10" className="size-[9px]" fill="none" stroke="currentColor"><path d="M0.8 0.8L9.2 9.2M9.2 0.8L0.8 9.2" /></svg></button>
      </div>
    </div>

    <div className="mx-[21px] flex h-16 items-start border-b-2 border-[#f0f0f2] pl-2 pr-[5px] pt-4">
      <svg viewBox="0 0 36 36" className="size-9 shrink-0" fill="none" stroke="#f5a834" aria-hidden="true">
        <rect x="2" y="2" width="13" height="13" rx="1.6" strokeWidth="2.6" />
        <rect x="2" y="21" width="13" height="13" rx="1.6" strokeWidth="2.6" />
        <path d="M20.6 5H34.6M20.6 14H34.6M20.6 23H34.6M20.6 32H34.6" strokeWidth="2.6" strokeLinecap="round" />
      </svg>
      <div className="pl-[22px]">
        <p className="text-[15px] leading-[18px] text-[#505050]">本次扫描未发现风险</p>
        <p className="pt-[8px] text-[8px] leading-3 text-[#888]">扫描已完成</p>
      </div>
      <div className="relative ml-auto">
        <span className="absolute -top-[15px] left-[3px] size-10 rounded-full bg-[#faf000]" />
        <button type="button" className="relative block h-[17px] w-[45px] rounded-[1px] bg-[#ff9408] text-[8px] text-[#ffc420]">完成</button>
        <svg viewBox="0 0 14 18" className="absolute top-1 left-[18px] h-[17px] w-[14px]" aria-hidden="true">
          <path d="M4.2 10.2V2.2Q4.2 0.8 5.4 0.8T6.6 2.2V6.6Q8 5.8 8.8 7.2Q10.2 6.4 10.9 7.8Q12.8 7.2 12.8 9.2V12.2Q12.8 14 11.6 15.2V17H5.6V15.6L1.4 10.8Q0.6 9.6 1.6 9T4.2 10.2Z" fill="#fff" stroke="#555" strokeWidth="0.9" />
          <path d="M6.6 7V10M8.8 7.4V10M10.9 8V10" stroke="#777" strokeWidth="0.6" />
        </svg>
      </div>
    </div>

    <svg viewBox="0 0 60 72" className="mx-auto mt-[51px] block h-[72px] w-[60px]" fill="none" aria-hidden="true">
      <defs>
        <radialGradient id="glow">
          <stop offset="0" stopColor="#fbdcb4" />
          <stop offset="0.7" stopColor="#fde8cf" />
          <stop offset="1" stopColor="#fdfdfe" />
        </radialGradient>
      </defs>
      <circle cx="30" cy="30" r="26" stroke="#f6a52c" strokeWidth="2" />
      <path d="M18.6 31.6L28.6 39L44.6 20.4" stroke="#f6a52c" strokeWidth="2.6" strokeLinecap="round" strokeLinejoin="round" />
      <ellipse cx="30" cy="66.5" rx="22" ry="3" fill="url(#glow)" />
    </svg>

    <div className="mx-auto mt-[23px] grid w-[322px] grid-cols-[216px_1fr] whitespace-nowrap text-[9px] text-[#808080]">
      <Stat text="扫描对象 : 1126个" icon={<path d="M0.8 0.8H15.2V15.2H0.8ZM3.4 4.4H8M3.4 7.4H12" />} />
      <Stat text="总用时 : 00:00:18" icon={<><circle cx="8" cy="8" r="7.2" /><path d="M8 3.6V8.4L10.8 11.2" /></>} />
      <Stat text="发现风险 : 0个" icon={<path d="M8 1.2L15.4 14.6H0.6ZM8 5.4V10.4M8 11.6V13" />} />
      <Stat text="处理风险 : 0个" icon={<path d="M9.4 1.8H0.8V15.2H14.4V6.8M4.8 6.8L8.4 10L15.2 1.6" />} />
    </div>
    <hr className="mx-[26px] mt-[49px] border-[#f0f0f2]" />
  </div>
);

export default function App() {
  return (
    <div className="relative flex min-h-screen flex-col overflow-hidden bg-[#fdfdfe] font-['Noto_Sans','Noto_Sans_CJK_SC',sans-serif]">
      <Header />
      <Ribbon />
      <AddressBar />
      <main className="flex flex-1">
        <Sidebar />
        <FileList />
      </main>
      <StatusBar />
      <Taskbar />
      <ScanDialog />
      <Watermark />
    </div>
  );
}
